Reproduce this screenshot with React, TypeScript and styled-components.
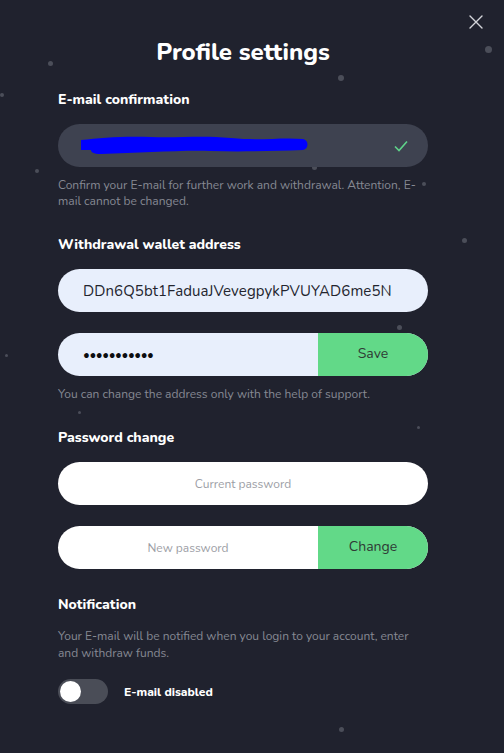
import styled, { createGlobalStyle } from "styled-components";
import { FC } from "react";

const GlobalStyle = createGlobalStyle`
	* { box-sizing: border-box; }
	body {
		margin: 0;
		background: #20222e;
		font-family: "Nunito", "Lato", "Open Sans", sans-serif;
	}
`;

// background dots (x, y, size)
const dots: [number, number, number][] = [
	[50, 63, 5],
	[488, 49, 7],
	[341, 78, 6],
	[2, 95, 4],
	[37, 171, 4],
	[314, 167, 5],
	[424, 184, 4],
	[464, 240, 5],
	[399, 327, 5],
	[6, 355, 3],
	[79, 412, 3],
	[418, 427, 3],
	[341, 729, 5],
];

const App: FC = () => {
	return (
		<>
			<GlobalStyle />
			<Modal>
				{dots.map(([x, y, s], i) => (
					<Dot key={i} style={{ left: x - s / 2, top: y - s / 2, width: s, height: s }} />
				))}
				<CloseButton aria-label='close'>
					<svg width='14' height='14' viewBox='0 0 14 14'>
						<path d='M1 1 L13 13 M13 1 L1 13' stroke='#d4d5da' strokeWidth='1.4' strokeLinecap='round' />
					</svg>
				</CloseButton>

				<Title>Profile settings</Title>

				<Sections>
					<Section>
						<Label>E-mail confirmation</Label>
						<EmailField>
							<svg width='230' height='24' viewBox='0 0 230 24' style={{ marginLeft: 23 }}>
								<path
									d='M0 6 C20 4 40 2 70 3 C100 4 120 1 150 4 C180 7 200 3 222 5 C228 6 228 15 222 16 C190 17 160 18 130 17 C100 16 60 19 20 20 C12 20 10 18 10 16 L0 16 Z'
									fill='#0000ff'
								/>
							</svg>
							<CheckIcon width='14' height='12' viewBox='0 0 14 12'>
								<path d='M1 6.5 L5 10.5 L13 1.5' fill='none' stroke='#5fd38a' strokeWidth='1.6' />
							</CheckIcon>
						</EmailField>
						<Hint>Confirm your E-mail for further work and withdrawal. Attention, E-mail cannot be changed.</Hint>
					</Section>

					<Section>
						<Label>Withdrawal wallet address</Label>
						<Fields>
							<Field $bg='#e8effc'>
								<Value>DDn6Q5bt1FaduaJVevegpykPVUYAD6me5N</Value>
							</Field>
							<Field $bg='#e8effc'>
								<Masked>•••••••••••</Masked>
								<ActionButton>Save</ActionButton>
							</Field>
						</Fields>
						<Hint>You can change the address only with the help of support.</Hint>
					</Section>

					<Section>
						<Label>Password change</Label>
						<Fields>
							<Field $bg='#ffffff'>
								<Placeholder>Current password</Placeholder>
							</Field>
							<Field $bg='#ffffff'>
								<Placeholder>New password</Placeholder>
								<ActionButton $large>Change</ActionButton>
							</Field>
						</Fields>
					</Section>

					<Section>
						<Label>Notification</Label>
						<NoteText>
							Your E-mail will be notified when you login to your account, enter and withdraw funds.
						</NoteText>
						<ToggleRow>
							<Toggle>
								<Knob />
							</Toggle>
							<ToggleLabel>E-mail disabled</ToggleLabel>
						</ToggleRow>
					</Section>
				</Sections>
			</Modal>
		</>
	);
};

export default App;

const Modal = styled.div`
	position: relative;
	width: 504px;
	height: 753px;
	overflow: hidden;
	background: #20222e;
	padding: 36px 76px 0 58px;
`;

const Dot = styled.span`
	position: absolute;
	border-radius: 50%;
	background: #4b4e59;
`;

const CloseButton = styled.button`
	position: absolute;
	top: 14px;
	right: 20px;
	width: 16px;
	height: 16px;
	padding: 0;
	border: 0;
	background: none;
	display: grid;
	place-items: center;
`;

const Title = styled.h1`
	margin: 0;
	text-align: center;
	color: #ffffff;
	font-size: 24px;
	line-height: 32px;
	font-weight: 800;
`;

const Sections = styled.div`
	margin-top: 22px;
	display: flex;
	flex-direction: column;
	gap: 26px;
`;

const Section = styled.section`
	display: flex;
	flex-direction: column;
`;

const Label = styled.h3`
	margin: 0 0 14px;
	color: #ffffff;
	font-size: 14px;
	line-height: 20px;
	font-weight: 800;
`;

const Fields = styled.div`
	display: flex;
	flex-direction: column;
	gap: 21px;
`;

const Field = styled.div<{ $bg: string }>`
	position: relative;
	height: 43px;
	border-radius: 22px;
	background: ${(p) => p.$bg};
	display: flex;
	align-items: center;
	overflow: hidden;
`;

const EmailField = styled(Field).attrs({ $bg: "#3e4250" })``;

const CheckIcon = styled.svg`
	position: absolute;
	right: 20px;
	top: 16px;
`;

const Value = styled.span`
	padding-left: 25px;
	color: #23252e;
	font-size: 15px;
	letter-spacing: 0.1px;
`;

const Masked = styled.span`
	flex: 1;
	padding-left: 25px;
	color: #0c0d10;
	font-size: 13px;
	font-weight: 700;
	letter-spacing: -0.4px;
`;

const Placeholder = styled.span`
	flex: 1;
	text-align: center;
	color: #9c9ea5;
	font-size: 12px;
`;

const ActionButton = styled.button<{ $large?: boolean }>`
	width: 110px;
	height: 100%;
	border: 0;
	background: #62d988;
	color: #2f3a35;
	font-family: inherit;
	font-size: 14px;
	padding: 0 0 ${(p) => (p.$large ? "2px" : "3px")};
`;

const Hint = styled.p`
	margin: 10px 0 0;
	color: #868993;
	font-size: 12px;
	line-height: 16px;
`;

const NoteText = styled.p`
	margin: -1px 0 0;
	color: #868993;
	font-size: 12px;
	line-height: 17px;
`;

const ToggleRow = styled.div`
	margin-top: 17px;
	display: flex;
	align-items: center;
	gap: 16px;
`;

const Toggle = styled.div`
	width: 50px;
	height: 25px;
	border-radius: 13px;
	background: #4a4d57;
	padding: 2px;
	display: flex;
	align-items: center;
`;

const Knob = styled.span`
	width: 21px;
	height: 21px;
	border-radius: 50%;
	background: #ffffff;
`;

const ToggleLabel = styled.span`
	color: #ffffff;
	font-size: 12px;
	font-weight: 800;
`;
